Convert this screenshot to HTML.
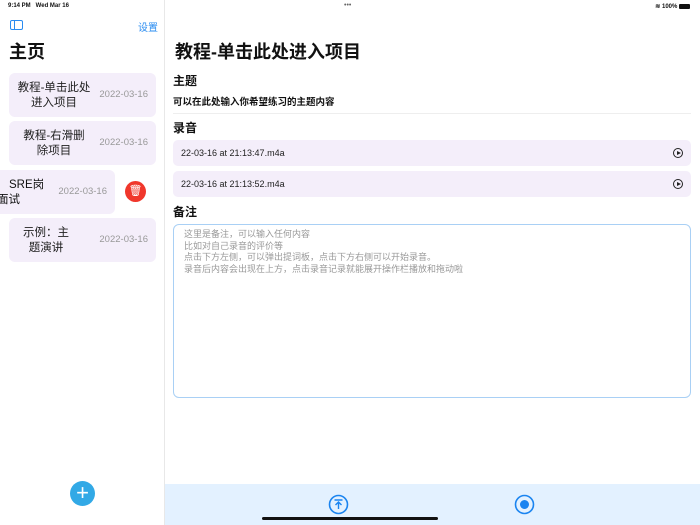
<!DOCTYPE html>
<html><head><meta charset="utf-8"><style>
*{margin:0;padding:0;box-sizing:border-box}
body{width:700px;height:525px;position:relative;overflow:hidden;background:#fff;font-family:"Liberation Sans","Noto Sans CJK SC",sans-serif;color:#111}
.a{position:absolute}
.card{position:absolute;left:9px;width:147px;height:44px;background:#f4eefa;border-radius:6px}
.card .t{position:absolute;left:7px;width:76px;top:8px;font-size:11.5px;line-height:15px;text-align:center;color:#222}
.card .d{position:absolute;right:8px;top:16px;font-size:9.5px;color:#999}
.rec{position:absolute;left:173px;width:518px;height:26px;background:#f4eefa;border-radius:5px;font-size:9px;line-height:26px;padding-left:8px;color:#222}
.play{position:absolute;right:8px;top:8px;width:10px;height:10px;border:1px solid #222;border-radius:50%}
.play:after{content:"";position:absolute;left:3px;top:2px;border-left:4px solid #222;border-top:2px solid transparent;border-bottom:2px solid transparent}
.h{position:absolute;left:173px;font-size:12px;font-weight:bold}
</style></head><body>
<div class="a" style="left:8px;top:3px;font-size:6px;font-weight:bold">9:14 PM&nbsp;&nbsp;&nbsp;Wed Mar 16</div>
<div class="a" style="left:344px;top:2px;font-size:7px;color:#666">•••</div>
<div class="a" style="right:10px;top:3px;font-size:6px;font-weight:bold">≋ 100% <span style="display:inline-block;width:11px;height:5px;background:#111;border-radius:1px;vertical-align:middle"></span></div>
<div class="a" style="left:164px;top:0;width:1px;height:525px;background:#e8e8e8"></div>
<div class="a" style="left:10px;top:20px;width:13px;height:10px;border:1.3px solid #2a8cf0;border-radius:2px"><div style="position:absolute;left:3px;top:0;width:1.3px;height:100%;background:#2a8cf0"></div></div>
<div class="a" style="left:138px;top:19px;font-size:10px;color:#2a8cf0">设置</div>
<div class="a" style="left:9px;top:38px;font-size:18px;font-weight:bold">主页</div>
<div class="card" style="top:73px"><div class="t">教程-单击此处进入项目</div><div class="d">2022-03-16</div></div>
<div class="card" style="top:121px"><div class="t" style="left:12px;width:66px">教程-右滑删除项目</div><div class="d">2022-03-16</div></div>
<div class="a" style="left:0;top:170px;width:115px;height:44px;background:#f4eefa;border-radius:0 6px 6px 0;overflow:hidden"><div style="position:absolute;left:9px;top:8px;font-size:11.5px;line-height:15px">SRE岗</div><div style="position:absolute;left:-3px;top:23px;font-size:11.5px;line-height:15px">面试</div><div style="position:absolute;right:8px;top:16px;font-size:9.5px;color:#999">2022-03-16</div></div>
<div class="a" style="left:125px;top:181px;width:21px;height:21px;border-radius:50%;background:#f0372c;color:#fff;font-size:11px;text-align:center;line-height:21px">🗑</div>
<div class="card" style="top:218px"><div class="t" style="left:12px;width:50px">示例：主题演讲</div><div class="d">2022-03-16</div></div>
<div class="a" style="left:70px;top:481px;width:25px;height:25px;border-radius:50%;background:#32a9e6;color:#fff;font-size:22px;text-align:center;line-height:24px">+</div>
<div class="a" style="left:175px;top:38px;font-size:18px;font-weight:bold">教程-单击此处进入项目</div>
<div class="h" style="top:72px">主题</div>
<div class="a" style="left:173px;top:94px;font-size:9.5px;font-weight:bold">可以在此处输入你希望练习的主题内容</div>
<div class="a" style="left:173px;top:113px;width:518px;height:1px;background:#eee"></div>
<div class="h" style="top:119px">录音</div>
<div class="rec" style="top:140px">22-03-16 at 21:13:47.m4a<div class="play"></div></div>
<div class="rec" style="top:171px">22-03-16 at 21:13:52.m4a<div class="play"></div></div>
<div class="h" style="top:203px">备注</div>
<div class="a" style="left:173px;top:224px;width:518px;height:174px;border:1px solid #a9d0f5;border-radius:6px;padding:4px 10px;font-size:9px;line-height:11.5px;color:#999">这里是备注，可以输入任何内容<br>比如对自己录音的评价等<br>点击下方左侧，可以弹出提词板，点击下方右侧可以开始录音。<br>录音后内容会出现在上方，点击录音记录就能展开操作栏播放和拖动啦</div>
<div class="a" style="left:165px;top:484px;width:535px;height:41px;background:#e3f1ff"></div>
<svg class="a" style="left:328px;top:494px" width="21" height="21" viewBox="0 0 21 21"><circle cx="10.5" cy="10.5" r="9" fill="none" stroke="#1a84f0" stroke-width="1.6"/><path d="M6.5 6h8M10.5 15V8M7.5 11l3-3 3 3" fill="none" stroke="#1a84f0" stroke-width="1.4"/></svg>
<svg class="a" style="left:514px;top:494px" width="21" height="21" viewBox="0 0 21 21"><circle cx="10.5" cy="10.5" r="9" fill="none" stroke="#1a84f0" stroke-width="1.6"/><circle cx="10.5" cy="10.5" r="4.5" fill="#1a84f0"/></svg>
<div class="a" style="left:262px;top:517px;width:176px;height:3px;background:#111;border-radius:2px"></div>
</body></html>
